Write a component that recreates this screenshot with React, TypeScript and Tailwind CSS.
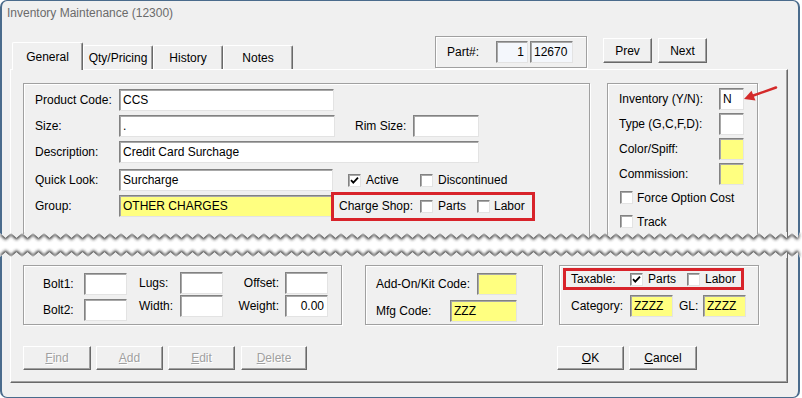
import React from 'react';
import clsx from 'clsx';

// classic win32 look: sunken fields, raised buttons, etched group boxes
const sunken =
  'border border-t-[#828282] border-l-[#828282] border-r-[#e3e3e3] border-b-[#e3e3e3] shadow-[inset_1px_1px_0_#a8a8a8]';
const raised =
  'border border-t-white border-l-white border-r-[#696969] border-b-[#696969] shadow-[inset_-1px_-1px_0_#a0a0a0]';
const etched = 'border border-[#a0a0a0] shadow-[inset_1px_1px_0_#fff,1px_1px_0_#fff]';

interface FieldProps {
  className?: string;
  value?: string;
  yellow?: boolean;
  right?: boolean;
  tint?: boolean;
}

const Field: React.FC<FieldProps> = ({ className, value = '', yellow, right, tint }) => (
  <input
    readOnly
    value={value}
    className={clsx(
      'h-[22px] shrink-0 px-[3px] text-[12px] text-black outline-none',
      sunken,
      yellow ? 'bg-[#ffff80]' : tint ? 'bg-[#f4f7fc]' : 'bg-white',
      right && 'text-right',
      className
    )}
  />
);

const Check: React.FC<{ on?: boolean }> = ({ on = false }) => (
  <span className={clsx('flex h-[13px] w-[13px] shrink-0 items-center justify-center bg-white', sunken)}>
    {on && (
      <svg width="9" height="9" viewBox="0 0 9 9">
        <path d="M1 4.2 L3.3 6.6 L8 1.6" fill="none" stroke="#000" strokeWidth="1.8" />
      </svg>
    )}
  </span>
);

const Btn: React.FC<{ className?: string; disabled?: boolean; children: React.ReactNode }> = ({
  className,
  disabled,
  children,
}) => (
  <button
    className={clsx(
      'flex shrink-0 items-center justify-center bg-[#f0f0f0] text-[12px]',
      raised,
      disabled ? 'text-[#a0a0a0] [text-shadow:1px_1px_0_#fff]' : 'text-black',
      className
    )}
  >
    {children}
  </button>
);

const Tab: React.FC<{ className: string; selected?: boolean; children: React.ReactNode }> = ({
  className,
  selected,
  children,
}) => (
  <div
    className={clsx(
      'flex items-center justify-center rounded-t-[2px] border-t border-l border-r border-t-white border-l-white border-r-[#696969] bg-[#f0f0f0] text-[12px] shadow-[inset_-1px_0_0_#a0a0a0]',
      selected ? 'relative z-10 -mb-px h-[28px]' : 'h-[24px]',
      className
    )}
  >
    {children}
  </div>
);

// zigzag edge of the torn screenshot
const TOOTH = 11;
function zigzag(a: number, b: number) {
  const pts: string[] = [];
  for (let i = 0; i * (TOOTH / 2) <= 800; i++) {
    pts.push(`L${i * (TOOTH / 2)} ${i % 2 === 0 ? a : b}`);
  }
  return pts.join(' ');
}
const topEdge = `M0 0 ${zigzag(1, 6)} L800 0 Z`;
const botEdge = `M0 26 ${zigzag(25, 20)} L800 26 Z`;

const Tear = () => (
  <svg width="802" height="26" className="block shrink-0">
    <defs>
      <filter id="tearBlur" x="-5%" y="-100%" width="110%" height="300%">
        <feGaussianBlur stdDeviation="1.4" />
      </filter>
      <clipPath id="tearTop">
        <path d={topEdge} />
      </clipPath>
      <clipPath id="tearBot">
        <path d={botEdge} />
      </clipPath>
    </defs>
    <rect width="802" height="26" fill="#fff" />
    <path d={topEdge} transform="translate(0 2)" fill="#333" filter="url(#tearBlur)" />
    <path d={botEdge} transform="translate(0 -2)" fill="#333" filter="url(#tearBlur)" />
    <g clipPath="url(#tearTop)">
      <rect width="800" height="26" fill="#f0f0f0" />
      <rect x="0" width="2" height="26" fill="#4a6b8c" />
      <rect x="798" width="2" height="26" fill="#4a6b8c" />
      <rect x="10" width="1" height="26" fill="#fff" />
      <rect x="23" width="1" height="26" fill="#a0a0a0" />
      <rect x="589" width="1" height="26" fill="#a0a0a0" />
      <rect x="607" width="1" height="26" fill="#a0a0a0" />
      <rect x="757" width="1" height="26" fill="#a0a0a0" />
      <rect x="787" width="1" height="26" fill="#696969" />
    </g>
    <g clipPath="url(#tearBot)">
      <rect width="800" height="26" fill="#f0f0f0" />
      <rect x="0" width="2" height="26" fill="#4a6b8c" />
      <rect x="798" width="2" height="26" fill="#4a6b8c" />
      <rect x="10" width="1" height="26" fill="#fff" />
      <rect x="787" width="1" height="26" fill="#696969" />
    </g>
  </svg>
);

export default function App() {
  return (
    <div className="flex h-[398px] w-[802px] flex-col overflow-hidden bg-white font-['Liberation_Sans',Arial,sans-serif] text-[12px] text-black">
      {/* Upper half of the dialog */}
      <div className="relative flex h-[232px] w-[800px] shrink-0 flex-col overflow-hidden rounded-t-[7px] border-x-2 border-t border-[#4a6b8c] bg-[#f0f0f0]">
        <div className="flex h-[23px] shrink-0 items-center pl-[5px] text-[#6b6b6b]">
          Inventory Maintenance (12300)
        </div>

        <div className="mt-[12px] flex h-[33px] shrink-0 items-end">
          <div className="ml-[10px] flex items-end">
            <Tab className="w-[71px]" selected>General</Tab>
            <Tab className="w-[70px]">Qty/Pricing</Tab>
            <Tab className="w-[70px]">History</Tab>
            <Tab className="w-[70px]">Notes</Tab>
          </div>

          <div className={clsx('ml-[142px] flex h-[32px] w-[152px] items-center self-start pl-[11px]', etched)}>
            <span className="w-[49px] shrink-0">Part#:</span>
            <Field className="w-[32px]" value="1" right tint />
            <Field className="ml-[2px] w-[43px]" value="12670" tint />
          </div>

          <Btn className="ml-[16px] mt-[2px] h-[25px] w-[49px] self-start">Prev</Btn>
          <Btn className="ml-[6px] mt-[2px] h-[25px] w-[49px] self-start">Next</Btn>
        </div>

        <div className="ml-[8px] flex w-[778px] flex-1 border-t border-l border-r border-t-white border-l-white border-r-[#696969] pl-[12px] pt-[13px] shadow-[inset_-1px_0_0_#a0a0a0]">
          {/* Left group */}
          <div className={clsx('flex h-[170px] w-[567px] shrink-0 flex-col pl-[11px] pt-[5px]', etched)}>
            <div className="flex h-[22px] items-center">
              <span className="w-[84px] shrink-0">Product Code:</span>
              <Field className="w-[215px]" value="CCS" />
            </div>
            <div className="mt-[4px] flex h-[22px] items-center">
              <span className="w-[84px] shrink-0">Size:</span>
              <Field className="w-[216px]" value="." />
              <span className="ml-[20px] w-[58px] shrink-0">Rim Size:</span>
              <Field className="w-[66px]" />
            </div>
            <div className="mt-[4px] flex h-[22px] items-center">
              <span className="w-[84px] shrink-0">Description:</span>
              <Field className="w-[360px]" value="Credit Card Surchage" />
            </div>
            <div className="mt-[6px] flex h-[22px] items-center">
              <span className="w-[84px] shrink-0">Quick Look:</span>
              <Field className="w-[214px]" value="Surcharge" />
              <span className="ml-[15px]">
                <Check on />
              </span>
              <span className="ml-[5px] w-[54px] shrink-0">Active</span>
              <Check />
              <span className="ml-[5px]">Discontinued</span>
            </div>
            <div className="mt-[4px] flex h-[22px] items-center">
              <span className="w-[84px] shrink-0">Group:</span>
              <Field className="w-[214px]" value="OTHER CHARGES" yellow />
              <div className="-ml-[2px] flex h-[29px] w-[204px] shrink-0 items-center border-[3px] border-[#d8232a] pl-[5px]">
                <span className="w-[81px] shrink-0">Charge Shop:</span>
                <Check />
                <span className="ml-[5px] w-[39px] shrink-0">Parts</span>
                <Check />
                <span className="ml-[4px]">Labor</span>
              </div>
            </div>
          </div>

          {/* Right group */}
          <div className={clsx('ml-[17px] flex h-[170px] w-[151px] shrink-0 flex-col pl-[11px] pt-[4px]', etched)}>
            <div className="flex h-[22px] items-center">
              <span className="w-[100px] shrink-0">Inventory (Y/N):</span>
              <Field className="w-[25px]" value="N" />
            </div>
            <div className="mt-[3px] flex h-[22px] items-center">
              <span className="w-[100px] shrink-0">Type (G,C,F,D):</span>
              <Field className="w-[25px]" />
            </div>
            <div className="mt-[3px] flex h-[22px] items-center">
              <span className="w-[100px] shrink-0">Color/Spiff:</span>
              <Field className="w-[25px]" yellow />
            </div>
            <div className="mt-[3px] flex h-[22px] items-center">
              <span className="w-[100px] shrink-0">Commission:</span>
              <Field className="w-[25px]" yellow />
            </div>
            <div className="ml-[1px] mt-[6px] flex h-[13px] items-center">
              <Check />
              <span className="ml-[4px]">Force Option Cost</span>
            </div>
            <div className="ml-[1px] mt-[11px] flex h-[13px] items-center">
              <Check />
              <span className="ml-[4px]">Track</span>
            </div>
          </div>
        </div>

        {/* Red call-out arrow */}
        <svg className="absolute left-[733px] top-[81px]" width="45" height="22" viewBox="0 0 45 22">
          <line x1="41" y1="5.5" x2="17" y2="14" stroke="#d42a2a" strokeWidth="2.5" strokeLinecap="round" />
          <polygon points="9,17 20.5,18.5 16.5,8.8" fill="#d42a2a" />
        </svg>
      </div>

      <Tear />

      {/* Lower half of the dialog */}
      <div className="h-[140px] w-[800px] shrink-0 overflow-hidden rounded-b-[7px] border-x-2 border-b border-[#4a6b8c] bg-[#f0f0f0]">
        <div className="ml-[8px] flex h-[125px] w-[778px] flex-col border-l border-r border-b border-l-white border-r-[#696969] border-b-[#696969] pl-[12px] pt-[7px] shadow-[inset_-1px_-1px_0_#a0a0a0]">
          <div className="flex h-[60px] shrink-0">
            {/* Bolt / lugs */}
            <div className={clsx('flex h-[60px] w-[319px] shrink-0 pl-[19px]', etched)}>
              <div className="flex flex-col pt-[7px]">
                <div className="flex h-[21px] items-center">
                  <span className="w-[41px] shrink-0">Bolt1:</span>
                  <Field className="h-[21px] w-[43px]" />
                </div>
                <div className="mt-[5px] flex h-[22px] items-center">
                  <span className="w-[41px] shrink-0">Bolt2:</span>
                  <Field className="w-[43px]" />
                </div>
              </div>
              <div className="ml-[12px] flex flex-col pt-[6px]">
                <div className="flex h-[21px] items-center">
                  <span className="w-[41px] shrink-0">Lugs:</span>
                  <Field className="h-[21px] w-[43px]" />
                </div>
                <div className="mt-[2px] flex h-[22px] items-center">
                  <span className="w-[41px] shrink-0">Width:</span>
                  <Field className="w-[43px]" />
                </div>
              </div>
              <div className="flex flex-col pt-[6px]">
                <div className="flex h-[21px] items-center">
                  <span className="w-[56px] shrink-0 text-right">Offset:</span>
                  <Field className="ml-[6px] h-[21px] w-[43px]" />
                </div>
                <div className="mt-[2px] flex h-[22px] items-center">
                  <span className="w-[56px] shrink-0 text-right">Weight:</span>
                  <Field className="ml-[6px] w-[43px]" value="0.00" right />
                </div>
              </div>
            </div>

            {/* Add-on / mfg */}
            <div className={clsx('ml-[23px] flex h-[60px] w-[178px] shrink-0 flex-col pl-[10px] pt-[7px]', etched)}>
              <div className="flex h-[21px] items-center">
                <span className="w-[101px] shrink-0">Add-On/Kit Code:</span>
                <Field className="h-[21px] w-[40px]" yellow />
              </div>
              <div className="mt-[6px] flex h-[21px] items-center">
                <span className="w-[74px] shrink-0">Mfg Code:</span>
                <Field className="h-[21px] w-[67px]" value="ZZZ" yellow />
              </div>
            </div>

            {/* Taxable */}
            <div className={clsx('ml-[16px] flex h-[60px] w-[200px] shrink-0 flex-col pt-[2px]', etched)}>
              <div className="ml-[3px] flex h-[22px] w-[181px] items-center border-[3px] border-[#d8232a] pl-[5px]">
                <span className="w-[59px] shrink-0">Taxable:</span>
                <Check on />
                <span className="ml-[5px] w-[39px] shrink-0">Parts</span>
                <Check />
                <span className="ml-[5px]">Labor</span>
              </div>
              <div className="mt-[5px] flex h-[22px] items-center pl-[11px]">
                <span className="w-[59px] shrink-0">Category:</span>
                <Field className="w-[43px]" value="ZZZZ" yellow />
                <span className="ml-[6px] w-[24px] shrink-0">GL:</span>
                <Field className="w-[43px]" value="ZZZZ" yellow />
              </div>
            </div>
          </div>

          <div className="mt-[21px] flex h-[24px] shrink-0">
            <Btn className="h-[24px] w-[68px]" disabled>
              <span className="underline">F</span>ind
            </Btn>
            <Btn className="ml-[5px] h-[24px] w-[67px]" disabled>
              <span className="underline">A</span>dd
            </Btn>
            <Btn className="ml-[5px] h-[24px] w-[67px]" disabled>
              <span className="underline">E</span>dit
            </Btn>
            <Btn className="ml-[6px] h-[24px] w-[66px]" disabled>
              <span className="underline">D</span>elete
            </Btn>
            <Btn className="ml-[250px] h-[24px] w-[67px]">
              <span className="underline">O</span>K
            </Btn>
            <Btn className="ml-[5px] h-[24px] w-[68px]">
              <span className="underline">C</span>ancel
            </Btn>
          </div>
        </div>
      </div>
    </div>
  );
}
